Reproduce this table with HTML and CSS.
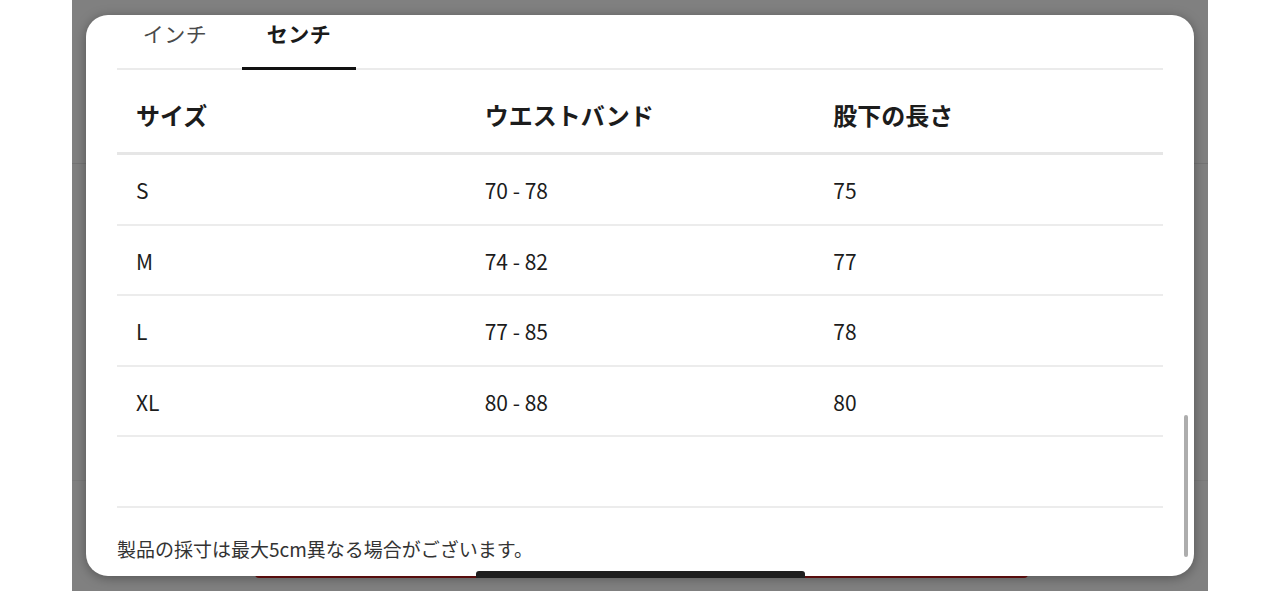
FILE: index.html
```html
<!DOCTYPE html>
<html lang="ja">
<head>
<meta charset="utf-8">
<title>サイズガイド</title>
<link rel="stylesheet" href="styles.css">
</head>
<body>
<div class="stage">
  <div class="backdrop">
    <div class="behind">
      <div class="behind-top"></div>
      <div class="behind-mid"></div>
      <div class="behind-bottom">
        <div class="behind-button"></div>
      </div>
    </div>

    <div class="modal">
      <div class="tabs">
        <div class="tab">インチ</div>
        <div class="tab active">センチ</div>
      </div>
      <div class="table">
        <div class="row head">
          <div class="cell">サイズ</div>
          <div class="cell">ウエストバンド</div>
          <div class="cell">股下の長さ</div>
        </div>
        <div class="row">
          <div class="cell">S</div>
          <div class="cell">70 - 78</div>
          <div class="cell">75</div>
        </div>
        <div class="row">
          <div class="cell">M</div>
          <div class="cell">74 - 82</div>
          <div class="cell">77</div>
        </div>
        <div class="row">
          <div class="cell">L</div>
          <div class="cell">77 - 85</div>
          <div class="cell">78</div>
        </div>
        <div class="row">
          <div class="cell">XL</div>
          <div class="cell">80 - 88</div>
          <div class="cell">80</div>
        </div>
        <div class="row">
          <div class="cell"></div>
          <div class="cell"></div>
          <div class="cell"></div>
        </div>
      </div>
      <p class="note">製品の採寸は最大5cm異なる場合がございます。</p>
      <div class="scrollbar"></div>
    </div>

    <div class="home-indicator"></div>
  </div>
</div>
</body>
</html>
```

FILE: styles.css
```css
* { box-sizing: border-box; }

html, body {
  margin: 0;
  padding: 0;
  background: #ffffff;
  font-family: "Noto Sans CJK JP", "Noto Sans", sans-serif;
  color: #1c1c1c;
}

.stage {
  display: flex;
  justify-content: center;
  height: 591px;
  overflow: hidden;
}

.backdrop {
  position: relative;
  width: 1136px;
  height: 591px;
  background: #808080;
  overflow: hidden;
}

.behind {
  display: flex;
  flex-direction: column;
  height: 100%;
}

.behind-top {
  height: 164px;
  border-bottom: 1px solid #747474;
}

.behind-mid {
  height: 317px;
  border-bottom: 1px solid #7a7a7a;
}

.behind-bottom {
  flex: 1;
  padding: 48px 0 0 183px;
}

.behind-button {
  width: 773px;
  height: 49px;
  background: #6e1010;
  border-radius: 4px;
}

.modal {
  position: absolute;
  left: 14px;
  top: 15px;
  width: 1108px;
  height: 561px;
  background: #ffffff;
  border-radius: 22px;
  box-shadow: 0 2px 12px rgba(0, 0, 0, 0.35);
  padding: 0 31px;
  overflow: hidden;
}

.tabs {
  display: flex;
  gap: 10px;
  height: 55px;
  border-bottom: 2px solid #ebebeb;
  padding-left: 1px;
}

.tab {
  width: 114px;
  text-align: center;
  font-size: 21px;
  line-height: 36px;
  color: #4a4a4a;
  margin-bottom: -2px;
  letter-spacing: 0.5px;
}

.tab.active {
  font-weight: 700;
  color: #1a1a1a;
  border-bottom: 3px solid #111111;
}

.table {
  display: flex;
  flex-direction: column;
}

.row {
  display: grid;
  grid-template-columns: repeat(3, 1fr);
  align-items: center;
  height: 70.5px;
  padding-top: 2px;
  border-bottom: 2px solid #ececec;
  font-size: 21px;
}

.row.head {
  height: 85px;
  border-bottom: 3px solid #e6e6e6;
  align-items: start;
  padding-top: 30px;
  font-size: 24px;
  font-weight: 700;
}

.cell {
  padding-left: 19px;
  line-height: 30px;
}

.note {
  margin: 0;
  padding-top: 27px;
  font-size: 19px;
  line-height: 28px;
  color: #333333;
}

.scrollbar {
  position: absolute;
  right: 6px;
  top: 400px;
  width: 4px;
  height: 142px;
  background: #adadad;
  border-radius: 2px;
}

.home-indicator {
  position: absolute;
  left: 404px;
  top: 571px;
  width: 329px;
  height: 7px;
  background: #1e1e1e;
  border-radius: 3px 3px 0 0;
}
```
